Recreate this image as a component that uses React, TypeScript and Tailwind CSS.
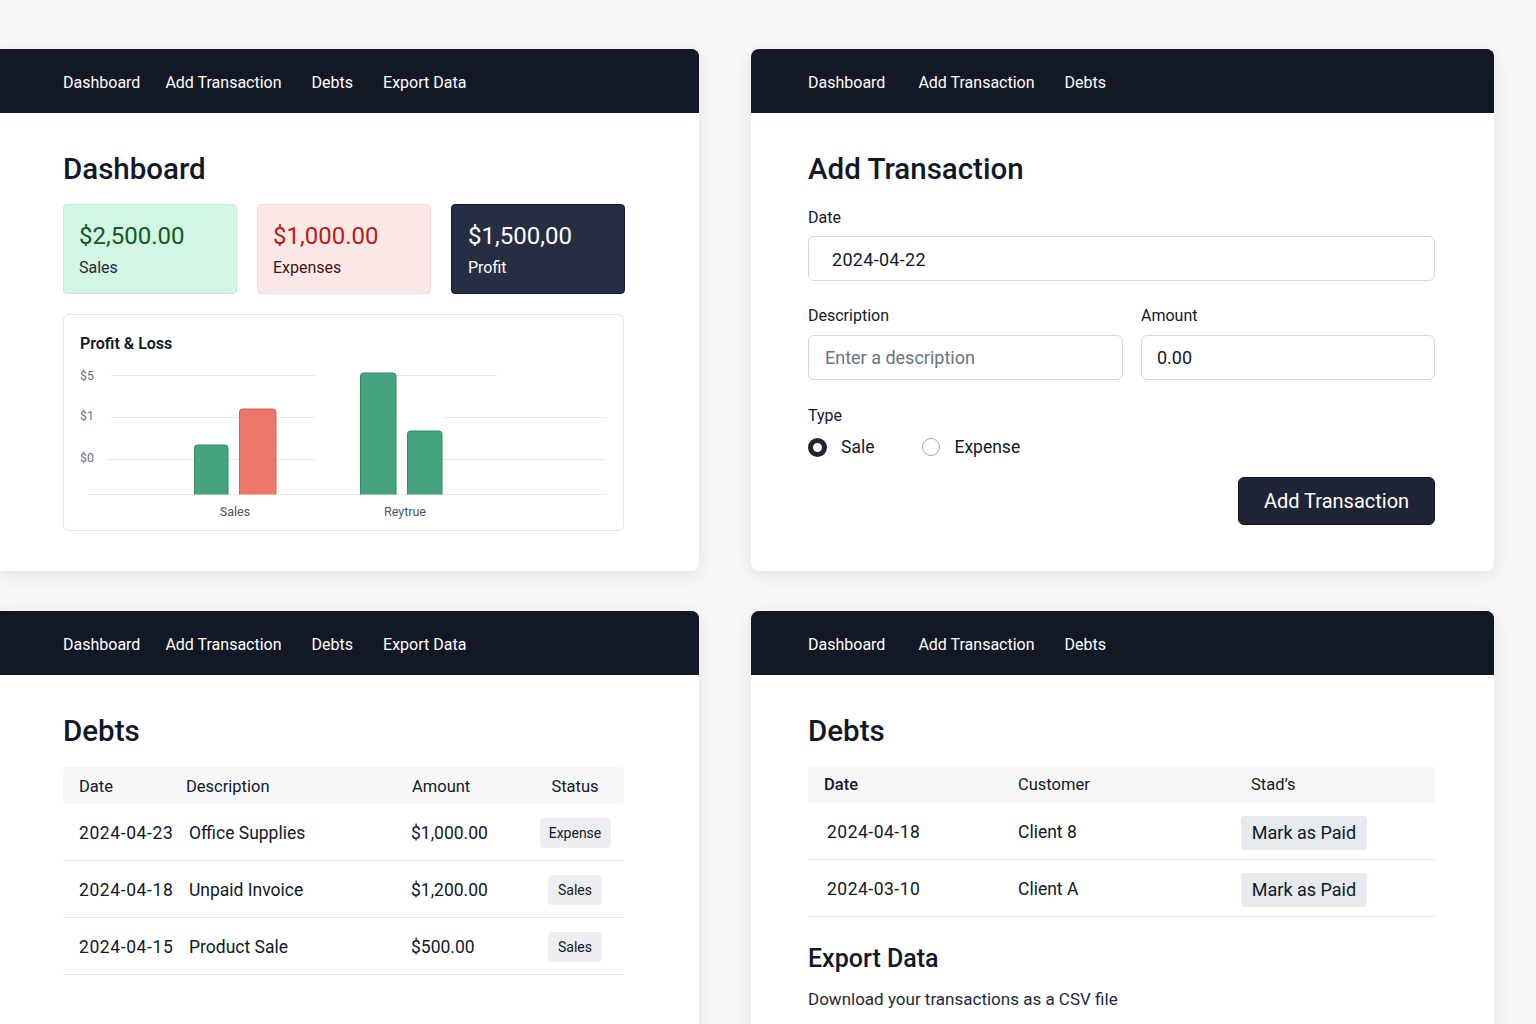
import React from "react";

function Nav({ items, gaps }: { items: string[]; gaps: number[] }) {
  return (
    <div className="h-[64px] bg-[#121826] flex items-center pt-[3px] text-white text-[16px]">
      {items.map((it, i) => (
        <span
          key={it}
          className={
            i === 0
              ? ""
              : gaps[i - 1] === 25
              ? "ml-[25px]"
              : gaps[i - 1] === 31
              ? "ml-[33px]"
              : "ml-[30px]"
          }
        >
          {it}
        </span>
      ))}
    </div>
  );
}

function Chart() {
  return (
    <svg width="559" height="175" viewBox="0 0 559 175" className="block">
      <g fill="#6b7280" fontSize="12.5" fontFamily="Roboto, sans-serif">
        <text x="16" y="25">$5</text>
        <text x="16" y="65">$1</text>
        <text x="16" y="107">$0</text>
      </g>
      <g stroke="#e8eaed" strokeWidth="1">
        <line x1="47" y1="20.5" x2="251" y2="20.5" />
        <line x1="332" y1="20.5" x2="433" y2="20.5" />
        <line x1="47" y1="62.5" x2="251" y2="62.5" />
        <line x1="378" y1="62.5" x2="540" y2="62.5" />
        <line x1="43" y1="104.5" x2="251" y2="104.5" />
        <line x1="372" y1="104.5" x2="540" y2="104.5" />
        <line x1="24" y1="139.5" x2="540" y2="139.5" />
      </g>
      <g strokeWidth="1">
        <path d="M130.5 139.5 V93 a3 3 0 0 1 3 -3 H161 a3 3 0 0 1 3 3 V139.5" fill="#46a380" stroke="#2c8c64" />
        <path d="M175.5 139.5 V57 a3 3 0 0 1 3 -3 H209 a3 3 0 0 1 3 3 V139.5" fill="#ec766b" stroke="#e25a4f" />
        <path d="M296.5 139.5 V21 a3 3 0 0 1 3 -3 H329 a3 3 0 0 1 3 3 V139.5" fill="#46a380" stroke="#2c8c64" />
        <path d="M343.5 139.5 V79 a3 3 0 0 1 3 -3 H375 a3 3 0 0 1 3 3 V139.5" fill="#46a380" stroke="#2c8c64" />
      </g>
      <g fill="#4b5563" fontSize="12.5" fontFamily="Roboto, sans-serif" textAnchor="middle">
        <text x="171" y="161">Sales</text>
        <text x="341" y="161">Reytrue</text>
      </g>
    </svg>
  );
}

function DashboardPanel() {
  return (
    <div className="w-[699px] h-[522px] bg-white rounded-r-lg overflow-hidden shadow-[0_4px_18px_rgba(0,0,0,0.09)]">
      <div className="pl-[63px] bg-[#121826]">
        <Nav items={["Dashboard", "Add Transaction", "Debts", "Export Data"]} gaps={[25, 30, 30]} />
      </div>
      <div className="pl-[63px] pt-[38px]">
        <h1 className="text-[29.5px] leading-[36px] font-medium text-[#111827]">Dashboard</h1>
        <div className="mt-[17px] flex gap-[20px] w-[562px]">
          <div className="w-[174px] h-[90px] rounded-[4px] bg-[#d3f5e3] border border-[#bdeed4] pl-[15px] pt-[17px]">
            <div className="text-[24px] leading-[28px] text-[#0f5a28]">$2,500.00</div>
            <div className="text-[16px] leading-[20px] mt-[8px] text-[#1f2937]">Sales</div>
          </div>
          <div className="w-[174px] h-[90px] rounded-[4px] bg-[#fde8e8] border border-[#fadada] pl-[15px] pt-[17px]">
            <div className="text-[24px] leading-[28px] text-[#c01818]">$1,000.00</div>
            <div className="text-[16px] leading-[20px] mt-[8px] text-[#3f1414]">Expenses</div>
          </div>
          <div className="w-[174px] h-[90px] rounded-[4px] bg-[#272e44] border border-[#161b29] pl-[16px] pt-[17px]">
            <div className="text-[24px] leading-[28px] text-white">$1,500,00</div>
            <div className="text-[16px] leading-[20px] mt-[8px] text-white">Profit</div>
          </div>
        </div>
        <div className="mt-[20px] w-[561px] h-[217px] rounded-[6px] border border-[#e2e4e8] bg-white">
          <div className="pl-[16px] pt-[17px] text-[16px] leading-[24px] font-semibold text-[#111827]">Profit &amp; Loss</div>
          <div className="-mt-[1px]">
            <Chart />
          </div>
        </div>
      </div>
    </div>
  );
}

function AddTransactionPanel() {
  return (
    <div className="w-[743px] h-[522px] bg-white rounded-lg overflow-hidden shadow-[0_4px_18px_rgba(0,0,0,0.09)]">
      <div className="pl-[57px] bg-[#121826]">
        <Nav items={["Dashboard", "Add Transaction", "Debts"]} gaps={[31, 30]} />
      </div>
      <div className="pl-[57px] pt-[38px] w-[684px]">
        <h1 className="text-[29.5px] leading-[36px] font-medium text-[#111827]">Add Transaction</h1>
        <div className="mt-[21px] text-[16px] leading-[20px] text-[#111827]">Date</div>
        <div className="mt-[8px] h-[45px] rounded-[6px] border border-[#d4d7dd] flex items-center pt-[2px] pl-[23px] text-[18px] tracking-[0.3px] text-[#111827]">
          2024-04-22
        </div>
        <div className="mt-[25px] flex gap-[18px]">
          <div className="w-[315px]">
            <div className="text-[16px] leading-[20px] text-[#111827]">Description</div>
            <div className="mt-[9px] h-[45px] rounded-[6px] border border-[#d4d7dd] flex items-center pl-[16px] text-[18px] text-[#6b7280]">
              Enter a description
            </div>
          </div>
          <div className="flex-1">
            <div className="text-[16px] leading-[20px] text-[#111827]">Amount</div>
            <div className="mt-[9px] h-[45px] rounded-[6px] border border-[#d4d7dd] flex items-center pl-[15px] text-[18px] text-[#111827]">
              0.00
            </div>
          </div>
        </div>
        <div className="mt-[26px] text-[16px] leading-[20px] text-[#111827]">Type</div>
        <div className="mt-[11px] flex items-center h-[20px] text-[17.5px] text-[#111827]">
          <span className="w-[19px] h-[19px] rounded-full border-[5px] border-[#1f2537] bg-white" />
          <span className="ml-[14px]">Sale</span>
          <span className="ml-[48px] w-[18px] h-[18px] rounded-full border-[1.5px] border-[#a3a8b1] bg-white" />
          <span className="ml-[14px]">Expense</span>
        </div>
        <div className="mt-[20px] flex justify-end">
          <div className="w-[197px] h-[48px] rounded-[6px] bg-[#1f2537] border border-[#11151f] flex items-center justify-center text-white text-[20px]">
            Add Transaction
          </div>
        </div>
      </div>
    </div>
  );
}

function DebtsLeftPanel() {
  const rows = [
    ["2024-04-23", "Office Supplies", "$1,000.00", "Expense"],
    ["2024-04-18", "Unpaid Invoice", "$1,200.00", "Sales"],
    ["2024-04-15", "Product Sale", "$500.00", "Sales"],
  ];
  return (
    <div className="w-[699px] h-[460px] bg-white rounded-tr-lg overflow-hidden shadow-[0_4px_18px_rgba(0,0,0,0.09)]">
      <div className="pl-[63px] bg-[#121826]">
        <Nav items={["Dashboard", "Add Transaction", "Debts", "Export Data"]} gaps={[25, 30, 30]} />
      </div>
      <div className="pl-[63px] pt-[38px]">
        <h1 className="text-[29.5px] leading-[36px] font-medium text-[#111827]">Debts</h1>
        <div className="mt-[18px] w-[561px]">
          <div className="h-[37px] rounded-[4px] bg-[#f6f7f9] grid grid-cols-[107px_225px_120px_1fr] items-center pt-[3px] pl-[16px] pr-[5px] text-[16.5px] text-[#111827]">
            <span>Date</span>
            <span>Description</span>
            <span className="pl-[1px]">Amount</span>
            <span className="text-center">Status</span>
          </div>
          {rows.map((r) => (
            <div
              key={r[0]}
              className="h-[57px] border-b border-[#e8eaed] grid grid-cols-[110px_222px_120px_1fr] items-center pt-[2px] pl-[16px] pr-[5px] text-[17.5px] text-[#111827]"
            >
              <span className="tracking-[0.6px]">{r[0]}</span>
              <span>{r[1]}</span>
              <span>{r[2]}</span>
              <span className="flex justify-center">
                <span
                  className={
                    r[3] === "Expense"
                      ? "h-[30px] w-[71px] rounded-[4px] bg-[#eceef1] flex items-center justify-center text-[14px]"
                      : "h-[30px] w-[54px] rounded-[4px] bg-[#eceef1] flex items-center justify-center text-[14px]"
                  }
                >
                  {r[3]}
                </span>
              </span>
            </div>
          ))}
        </div>
      </div>
    </div>
  );
}

function DebtsRightPanel() {
  const rows = [
    ["2024-04-18", "Client 8"],
    ["2024-03-10", "Client A"],
  ];
  return (
    <div className="w-[743px] h-[460px] bg-white rounded-t-lg overflow-hidden shadow-[0_4px_18px_rgba(0,0,0,0.09)]">
      <div className="pl-[57px] bg-[#121826]">
        <Nav items={["Dashboard", "Add Transaction", "Debts"]} gaps={[31, 30]} />
      </div>
      <div className="pl-[57px] pt-[38px]">
        <h1 className="text-[29.5px] leading-[36px] font-medium text-[#111827]">Debts</h1>
        <div className="mt-[17px] w-[627px]">
          <div className="h-[37px] rounded-[4px] bg-[#f6f7f9] grid grid-cols-[194px_233px_1fr] items-center pt-[2px] pl-[16px] text-[16.5px] text-[#111827]">
            <span className="font-medium">Date</span>
            <span>Customer</span>
            <span>Stad’s</span>
          </div>
          {rows.map((r) => (
            <div
              key={r[0]}
              className="h-[57px] border-b border-[#e5e7eb] grid grid-cols-[191px_223px_1fr] items-center pt-[3px] pl-[19px] text-[17.5px] text-[#111827]"
            >
              <span className="tracking-[0.5px]">{r[0]}</span>
              <span>{r[1]}</span>
              <span>
                <span className="inline-flex h-[34px] w-[126px] rounded-[4px] bg-[#e6e9ee] items-center justify-center text-[18px]">
                  Mark as Paid
                </span>
              </span>
            </div>
          ))}
        </div>
        <h2 className="mt-[27px] text-[25px] leading-[30px] font-medium text-[#111827]">Export Data</h2>
        <p className="mt-[14px] text-[17px] leading-[22px] text-[#1f2937]">Download your transactions as a CSV file</p>
      </div>
    </div>
  );
}

export default function App() {
  return (
    <div className="w-[1536px] h-[1024px] overflow-hidden bg-[#f8f8f9] font-[family-name:Roboto,sans-serif]">
      <div className="pt-[49px] flex flex-col gap-[40px]">
        <div className="flex gap-[52px]">
          <DashboardPanel />
          <AddTransactionPanel />
        </div>
        <div className="flex gap-[52px]">
          <DebtsLeftPanel />
          <DebtsRightPanel />
        </div>
      </div>
    </div>
  );
}
